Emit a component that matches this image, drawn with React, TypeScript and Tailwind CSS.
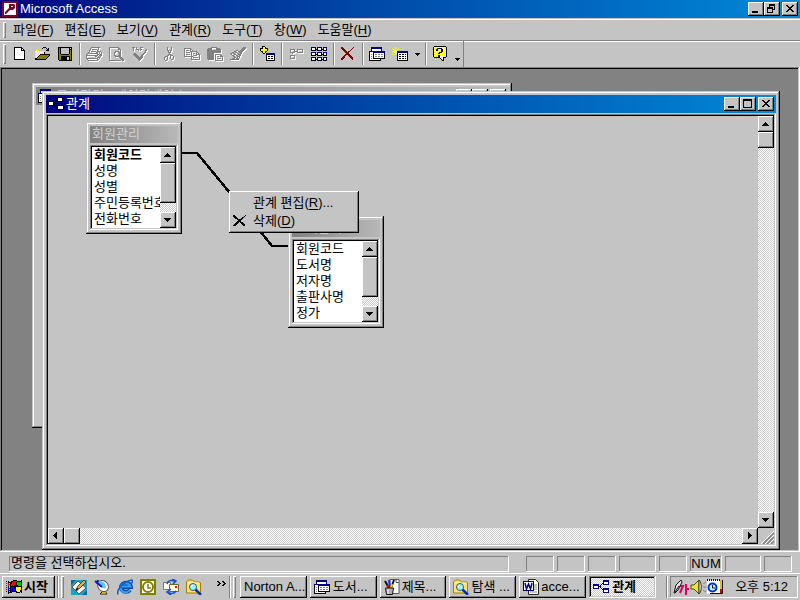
import type { ReactNode } from "react"

const FACE = "bg-[#c4c4c4]"
const WINDOW_EDGE =
  "shadow-[inset_-1px_-1px_#000,inset_1px_1px_#c4c4c4,inset_-2px_-2px_#808080,inset_2px_2px_#fff]"
const BUTTON_EDGE = "shadow-[inset_-1px_-1px_#000,inset_1px_1px_#fff,inset_-2px_-2px_#808080]"
const SUNKEN_EDGE =
  "shadow-[inset_-1px_-1px_#fff,inset_1px_1px_#808080,inset_-2px_-2px_#c4c4c4,inset_2px_2px_#000]"
const THIN_SUNKEN = "shadow-[inset_-1px_-1px_#fff,inset_1px_1px_#808080]"
const CHECKER = "bg-[repeating-conic-gradient(#fff_0_25%,#cacaca_0_50%)] bg-[length:2px_2px]"

const palette: Record<string, string> = {
  k: "#000000",
  w: "#ffffff",
  n: "#000080",
  g: "#808080",
  l: "#c0c0c0",
  y: "#ffff00",
  o: "#808000",
  m: "#800000",
  r: "#ff0000",
  b: "#0000ff",
  e: "#00c000"
}

const sprites: Record<string, string[]> = {
  relation: [
    "..........kkkkk.",
    ".........kwwwwk.",
    ".........kwwwwk.",
    "........kkwwwwk.",
    "kkkkkkkk.kkkkk..",
    "kwwwwkk.........",
    "kwwwwkkk.k......",
    "kwwwwkk.........",
    "kkkkkkkk.kkkkkk.",
    "........kkwwwwwk",
    ".........kwwwwwk",
    ".........kwwwwwk",
    "..........kkkkkk"
  ],
  relationBlue: [
    "..........nnnnnn",
    "..........nnnnnn",
    "..........nwwwwn",
    ".........knwwwwn",
    "nnnnnn..k.nnnnnn",
    "nnnnnn.k........",
    "nwwwwnkk........",
    "nwwwwn.k........",
    "nnnnnn..k.nnnnnn",
    ".........knnnnnn",
    "..........nwwwwn",
    "..........nwwwwn",
    "..........nnnnnn"
  ],
  blank: [
    "kkkkkkkk...",
    "kwwwwwwkk..",
    "kwwwwwwkwk.",
    "kwwwwwwkkkk",
    "kwwwwwwwwwk",
    "kwwwwwwwwwk",
    "kwwwwwwwwwk",
    "kwwwwwwwwwk",
    "kwwwwwwwwwk",
    "kwwwwwwwwwk",
    "kwwwwwwwwwk",
    "kwwwwwwwwwk",
    "kkkkkkkkkkk"
  ],
  open: [
    ".........kkk....",
    "........k...k.k.",
    ".............kk.",
    "..yyy.......kkk.",
    ".ywywyyyyyy.....",
    ".ywywywywyk.....",
    ".yywywywywk.....",
    ".ywywykkkkkkkkkk",
    ".yywykoooooooook",
    ".ywykoooooooook.",
    ".yykoooooooook..",
    ".kkoooooooook...",
    ".kkkkkkkkkkk...."
  ],
  save: [
    "kkkkkkkkkkkkkk",
    "kokllllllllklk",
    "kokllllllllkkk",
    "kokllllllllkok",
    "kokllllllllkok",
    "kokllllllllkok",
    "kokllllllllkok",
    "kookkkkkkkkook",
    "kooooooooooook",
    "kookkkkkkkkkok",
    "kookkkkkkllkok",
    "kookkkkkkllkok",
    "kookkkkkkllkok",
    ".kkkkkkkkkkkkk"
  ],
  print: [
    ".....ggggggggg..",
    "....g.......g...",
    "....g.ggggg.g...",
    "...g.......g....",
    "...g.ggggg.gggg.",
    "..g.......gg.g.g",
    ".ggggggggggg.g.g",
    "g..........gg.gg",
    "gggggggggggg.ggg",
    "g........gg.g.g.",
    "g..........ggg..",
    "gggggggggggg.g..",
    ".g.........gg...",
    "..gggggggggg...."
  ],
  preview: [
    "gggggggggg......",
    "g........gg.....",
    "g........ggg....",
    "g..........g....",
    "g.....gggg.g....",
    "g....gg..ggg....",
    "g....g....gg....",
    "g....g....gg....",
    "g....gg..ggg....",
    "g.....gggggg....",
    "g.........ggg...",
    "g..........ggg..",
    "g...........ggg.",
    "gggggggggggg.gg."
  ],
  spell: [
    "ggg.g...ggg.....",
    ".g..g...g.......",
    ".g..ggg.gg....g.",
    ".g....g.g....gg.",
    ".............g..",
    "............gg..",
    "..gg.......gg...",
    ".gggg.....gg....",
    "..gggg...gg.....",
    "...gggg.ggg.....",
    "....ggggggg.....",
    ".....ggggg......",
    "......ggg.......",
    ".......g........"
  ],
  cut: [
    "...g...g...",
    "...g...g...",
    "...g...g...",
    "...gg.gg...",
    "....g.g....",
    "....ggg....",
    ".....g.....",
    "....ggg....",
    "...gg.ggg..",
    ".ggg..g..g.",
    "g..g..g..g.",
    "g..g..g..g.",
    "g..g...gg..",
    ".gg........"
  ],
  copy: [
    "ggggggg.........",
    "g.....gg........",
    "g.ggg.g.g.......",
    "g.....ggggggg...",
    "g.gggg.g....gg..",
    "g......g.gg.g.g.",
    "g.gggg.g....gggg",
    "g......g.gggg..g",
    "ggggggggg......g",
    ".......g.ggggg.g",
    ".......g.......g",
    ".......ggggggggg"
  ],
  paste: [
    "....gggggg......",
    ".gggg....gggg...",
    "ggggg....ggggg..",
    "gggggggggggggg..",
    "gggggggggggggg..",
    "gggggggggggggg..",
    "ggggggg.........",
    "ggggggg.gggggg..",
    "ggggggg.g....gg.",
    "ggggggg.g.gg.ggg",
    "ggggggg.g......g",
    "ggggggg.g.gggg.g",
    ".gggggg.g......g",
    "........gggggggg"
  ],
  brush: [
    ".............ggg",
    "............gggg",
    "...........gggg.",
    "......gg..gggg..",
    "....gg..ggggg...",
    "..gg.gg..ggg....",
    "gg.gg..gg.gg....",
    ".g..gg..ggg.....",
    "..gg..gg.gg.....",
    "...gg..ggg......",
    "....gg.g.g......",
    "..ggg.ggg.......",
    "ggggggggg......."
  ],
  addTable: [
    "...kkk..........",
    "...kyyk.........",
    ".kkkyykkk.......",
    ".kyyyyyyk.......",
    ".kyyyyyyk.......",
    "..kkyykk........",
    "...kyyk.........",
    "....kk.nnnnnnnnn",
    ".......nnnnnnnnn",
    ".......kwwwwwwwk",
    ".......kwkkwkkwk",
    ".......kwwwwwwwk",
    ".......kwkkwkkwk",
    ".......kwwwwwwwk",
    ".......kkkkkkkkk"
  ],
  direct: [
    "ggggg..gggggg",
    "g...g..g....g",
    "g...gggg....g",
    "ggggg..gggggg",
    "..g..........",
    ".............",
    "ggggg........",
    "g...g........",
    "g...g........",
    "ggggg........"
  ],
  showAll: [
    "nnnnn.nnnnn.nnnn",
    "nwwwn.nwwwn.nwwn",
    "kwwwkkkwwwkkkwwk",
    "kkkkk.kkkkk.kkkk",
    "................",
    "nnnnn.nnnnn.nnnn",
    "nwwwn.nwwwn.nwwn",
    "kwwwkkkwwwkkkwwk",
    "kkkkk.kkkkk.kkkk",
    "................",
    "nnnnn.nnnnn.nnnn",
    "nwwwn.nwwwn.nwwn",
    "kwwwkkkwwwkkkwwk",
    "kkkkk.kkkkk.kkkk"
  ],
  cross: [
    "mm..........m.",
    "mmm........m..",
    ".mmm......m...",
    "..mmm....m....",
    "...mmm.mm.....",
    "....mmmm......",
    ".....mmm......",
    "....mmmmm.....",
    "...mm..mmm....",
    "..mm....mmm...",
    ".mmm.....mmm..",
    "mmm.......mm..",
    "mm.........m.."
  ],
  database: [
    "..nnnnnnnnnnn...",
    "..nnnnnnnnnnn...",
    "..nwwwwwwwwwn...",
    "..nwwwwwwwwwn...",
    "nnnnnnnnnnnnnnnn",
    "nwwwnnnnnnnnnnnn",
    "nwwwkwwwwwwwwwwk",
    "kwgwkwggwggwggwk",
    "kwwwkwwwwwwwwwwk",
    "kwgwkwggwggwggwk",
    "kwwwkwwwwwwwwwwk",
    "kwgwkkkkkkkkkkkk",
    "kwwwwwwwwwwk....",
    "kkkkkkkkkkkk...."
  ],
  newObject: [
    "...y............",
    "y..y..y.........",
    ".y.y.y..........",
    "..ywy...........",
    "yyywwnnnnnnnnnnn",
    "..yywnnnnnnnnnnn",
    ".y.y.kwwwwwwwwwk",
    "y..y.kwkkwkkwkwk",
    ".....kwwwwwwwwwk",
    ".....kwkkwkkwkwk",
    ".....kwwwwwwwwwk",
    ".....kwkkwkkwkwk",
    ".....kwwwwwwwwwk",
    ".....kkkkkkkkkkk"
  ],
  help: [
    ".kkkkkkkkkkkk..",
    "kwywywywywywyk.",
    "kywynnnnnwwyyk.",
    "kwynnwywnnywyk.",
    "kywnnywynnwywk.",
    "kwywywywnnywyk.",
    "kywywynnnywywk.",
    "kwywynnywywyyk.",
    "kywywywywywywk.",
    "kwywynnywywyyk.",
    "kywywnnwywywyk.",
    ".kkkkkkwywkkk..",
    ".......kywk....",
    "........kyk....",
    ".........kk...."
  ],
  erase: [
    "kk..........k",
    "kkk........k.",
    ".kkk.....kk..",
    "..kkk...kk...",
    "....kkkkk....",
    ".....kkk.....",
    "....kkkk.....",
    "...kkk.kkk...",
    "..kkk...kkk..",
    ".kkk.....kkk.",
    "kkk.......kk."
  ],
  flag: [
    ".......kkkk....k",
    "k.k..kkrrrrkkkkk",
    "..kkkkrrrrkeeeek",
    "r.r.kkrrrrkeeeek",
    "..rrkrrrrrkeeeek",
    "r.r.krrrkkkkeeek",
    "..k.kkkkkkkkkkkk",
    "b.b.kbbbkkyyyyyk",
    "..bbkbbbbkyyyyyk",
    "b.b.kbbbbkyyyyyk",
    "..bbkbbbbkyyyykk",
    "k.k.kbkkkkkyyykk",
    "..kkkk....kkkk.k",
    "..k............."
  ]
}

interface SpriteProps {
  name: string
  disabled?: boolean
}

function Sprite({ name, disabled }: SpriteProps) {
  const rows = sprites[name]
  const width = rows[0].length + 1
  const height = rows.length + 1

  const draw = (offset: number, color?: string) =>
    rows.flatMap((row, y) =>
      [...row].map((key, x) =>
        key === "." ? null : (
          <rect
            key={`${offset}-${x}-${y}`}
            x={x + offset}
            y={y + offset}
            width={1}
            height={1}
            fill={color ?? palette[key]}
          />
        )
      )
    )

  return (
    <svg
      width={width}
      height={height}
      viewBox={`0 0 ${width} ${height}`}
      shapeRendering="crispEdges"
      className="shrink-0"
      aria-hidden="true"
    >
      {disabled && draw(1, "#ffffff")}
      {draw(0)}
    </svg>
  )
}

function Drawing({ children }: { children: ReactNode }) {
  return (
    <svg width="16" height="16" viewBox="0 0 16 16" className="shrink-0" aria-hidden="true">
      {children}
    </svg>
  )
}

function AccessLogo() {
  return (
    <Drawing>
      <rect width="16" height="16" fill="#800028" />
      <rect x="2" y="2" width="12" height="12" fill="#fff" />
      <path d="M7 3h5l1 1v3l-2 2H8l-4 4H3v-2l4-4z" fill="#800028" />
      <path d="M9 5h2v1H9z" fill="#fff" />
    </Drawing>
  )
}

function DesktopIcon() {
  return (
    <Drawing>
      <path d="M0 1h16v15H0z" fill="#1c9fd0" />
      <path d="M0 1h5L0 6zM16 16h-5l5-5z" fill="#0868a0" />
      <path d="M1 8 7 2l8 7-7 6z" fill="#fff" stroke="#555" />
      <path d="M5 11 7 7l6-6 2 2-6 6z" fill="#f0b040" stroke="#703000" />
      <path d="m5 11 2-1" stroke="#111" strokeWidth="2" />
    </Drawing>
  )
}

function DishIcon() {
  return (
    <Drawing>
      <path d="M6 15h7l-2-3H9z" fill="#eee" stroke="#222" />
      <ellipse cx="9" cy="7" rx="5" ry="6" transform="rotate(-40 9 7)" fill="#fff" stroke="#555" />
      <path d="M4 3c4-2 8 1 8 6-4 1-7-2-8-6z" fill="#64c8f0" />
      <path d="m1 2 7 6M4 1 3 5" stroke="#0020c0" strokeWidth="2" />
      <path d="M8 14h4" stroke="#d0a000" strokeWidth="1.5" />
    </Drawing>
  )
}

function ExplorerIcon() {
  return (
    <Drawing>
      <path d="M13 11a5 4.5 0 1 1 1-3H5" fill="none" stroke="#0848b0" strokeWidth="4" />
      <path d="M13 11a5 4.5 0 1 1 .5-3.5H5" fill="none" stroke="#38a0f4" strokeWidth="2" />
      <path d="M1 15.500C-1 11 7 2 15 1c1 1 0 3-1 4" fill="none" stroke="#0860c8" strokeWidth="1.5" />
    </Drawing>
  )
}

function OutlookIcon() {
  return (
    <Drawing>
      <rect width="16" height="16" fill="#808000" />
      <rect x="2" y="2" width="12" height="12" fill="#fff" />
      <circle cx="8" cy="8" r="5" fill="#fff" stroke="#808000" strokeWidth="2" />
      <path d="M8 5v4h3" fill="none" stroke="#808000" strokeWidth="1.5" />
    </Drawing>
  )
}

function MailIcon() {
  return (
    <Drawing>
      <path d="M.5 3.500h7v7h-7z" fill="#fff" stroke="#777" />
      <path d="M6.500 5.500h9v7h-9z" fill="#fff8d0" stroke="#806020" />
      <path d="M12 7h2v2h-2z" fill="#e02000" />
      <path d="M4 5c1-4 4-4 8-3M9 0l4 2-3 3" fill="none" stroke="#1050d0" strokeWidth="1.5" />
      <path d="M13 12c-2 3-5 3-8 1M8 10l-4 3 4 3" fill="none" stroke="#1050d0" strokeWidth="1.5" />
    </Drawing>
  )
}

function SearchFolderIcon() {
  return (
    <Drawing>
      <path d="M.5 14V3l2-2h4l2 2h5l1 1v10z" fill="#ffe070" stroke="#a08000" />
      <path d="M2 4h11" stroke="#fff8c0" />
      <path d="m9 10 6 6" stroke="#0030b0" strokeWidth="2.5" />
      <circle cx="7" cy="8" r="3.5" fill="#a0f4ff" stroke="#305878" />
      <path d="m5 8 2-2" stroke="#fff" />
    </Drawing>
  )
}

function CupIcon() {
  return (
    <Drawing>
      <path d="M6 .5h9v14H6z" fill="#fff" stroke="#555" />
      <path d="M12 .5v3h3" fill="none" stroke="#555" />
      <path d="m1 2 4 7M10 1 7 9" stroke="#111" strokeWidth="2" />
      <path d="m5 1 1 7" stroke="#1030ff" strokeWidth="2" />
      <path d="m3 6 2 3" stroke="#e00000" strokeWidth="2" />
      <path d="m8 5-1 4" stroke="#e8d000" strokeWidth="2" />
      <path d="M1.5 9h8l-1 6.5h-6z" fill="#b0b0b0" stroke="#111" />
      <path d="M4 10v5" stroke="#fff" />
    </Drawing>
  )
}

function WordIcon() {
  return (
    <Drawing>
      <path d="M5.5.5h7l3 3v12h-10z" fill="#fff" stroke="#222" />
      <path d="M11 6h3M11 8h3M11 10h3M7 13h7" stroke="#888" />
      <rect x=".5" y="2.5" width="10" height="9" fill="#fff" stroke="#000080" />
      <path d="m2 4 1.5 6 2-5 2 5L9 4" fill="none" stroke="#000080" strokeWidth="1.5" />
    </Drawing>
  )
}

function ImeIcon() {
  return (
    <Drawing>
      <path d="M6 7h4l-3 7M13 5v11M13 10h3" fill="none" stroke="#e00060" strokeWidth="2" />
      <path d="m1 14 2-8 5-5 1 2-4 8-3 3z" fill="#e8e8e8" stroke="#111" />
      <path d="m2 13 4-6" stroke="#111" />
    </Drawing>
  )
}

function SpeakerIcon() {
  return (
    <Drawing>
      <path d="M1 6h3l5-5v14l-5-5H1z" fill="#f0e040" stroke="#555500" />
      <path d="M9 1c3 3 3 11 0 14z" fill="#fff" stroke="#333" />
      <path d="m13 5 3-2M13 8h3M13 11l3 2" stroke="#808080" />
    </Drawing>
  )
}

function SchedulerIcon() {
  return (
    <Drawing>
      <path d="M0 1h13v14H0z" fill="#fff" />
      <path d="M0 1h13" stroke="#111" strokeDasharray="1 1" strokeWidth="2" />
      <path d="M3 14.5h12.500V1" fill="none" stroke="#111" />
      <path d="M14 1v9" stroke="#e8c000" strokeWidth="2" />
      <path d="M14 10v4" stroke="#d00000" strokeWidth="2" />
      <circle cx="5.5" cy="8.5" r="4" fill="#c0f8ff" stroke="#0030c0" strokeWidth="2" />
      <path d="M5.5 6v3H8" fill="none" stroke="#111" />
    </Drawing>
  )
}

type Glyph = "minimize" | "restore" | "maximize" | "close"

function CaptionButton({ glyph, label }: { glyph: Glyph; label: string }) {
  return (
    <button
      type="button"
      aria-label={label}
      className={`grid h-[14px] w-4 place-items-center ${FACE} ${BUTTON_EDGE}`}
    >
      <svg width="16" height="14" viewBox="0 0 16 14" fill="#000" shapeRendering="crispEdges">
        {glyph === "minimize" && <path d="M4 9h6v2H4z" />}
        {glyph === "maximize" && <path fillRule="evenodd" d="M3 2h9v9H3zM4 4v6h7V4z" />}
        {glyph === "restore" && (
          <path
            fillRule="evenodd"
            d="M5 2h6v6H9v3H3V5h2zM6 4v1h3v2h1V4zM4 7v3h4V7z"
          />
        )}
        {glyph === "close" && (
          <path d="M4 3h2v1h1v1h2V4h1V3h2v1h-1v1h-1v1H9v1h1v1h1v1h1v1h-2V9H9V8H7v1H6v1H4V9h1V8h1V7h1V6H6V5H5V4H4z" />
        )}
      </svg>
    </button>
  )
}

function CaptionButtons({ maximized }: { maximized?: boolean }) {
  return (
    <div className="ml-auto flex pr-[2px]">
      <CaptionButton glyph="minimize" label="최소화" />
      <CaptionButton
        glyph={maximized ? "restore" : "maximize"}
        label={maximized ? "이전 크기로" : "최대화"}
      />
      <div className="w-[2px]" />
      <CaptionButton glyph="close" label="닫기" />
    </div>
  )
}

const arrows = {
  up: "M7 6h1v1h1v1h1v1h1v1H4V9h1V8h1V7h1z",
  down: "M4 6h7v1h-1v1H9v1H8v1H7V9H6V8H5V7H4z",
  left: "M8 4h1v7H8v-1H7V9H6V8H5V7h1V6h1V5h1z",
  right: "M6 4h1v1h1v1h1v1h1v1H9v1H8v1H7v1H6z"
}

function ScrollButton({ direction }: { direction: keyof typeof arrows }) {
  return (
    <button
      type="button"
      aria-label={direction}
      className={`size-4 shrink-0 ${FACE} ${BUTTON_EDGE}`}
    >
      <svg width="16" height="16" viewBox="0 0 16 16" shapeRendering="crispEdges">
        <path d={arrows[direction]} />
      </svg>
    </button>
  )
}

function TableBox({ title, fields, boldFirst }: { title: string; fields: string[]; boldFirst?: boolean }) {
  return (
    <section className={`w-24 p-1 ${FACE} ${WINDOW_EDGE}`}>
      <h2 className="h-[17px] bg-linear-to-r from-[#828282] to-[#b8b8b8] pl-[2px] leading-4 text-[#d0d0d0]">
        {title}
      </h2>
      <div className={`mt-[2px] flex bg-white p-[2px] ${SUNKEN_EDGE}`}>
        <ul className="min-w-0 flex-1 overflow-hidden pb-px pl-[2px] leading-4 whitespace-nowrap">
          {fields.map((field, index) => (
            <li key={field} className={boldFirst && index === 0 ? "font-bold" : ""}>
              {field}
            </li>
          ))}
        </ul>
        <div className={`flex w-4 flex-col ${CHECKER}`}>
          <ScrollButton direction="up" />
          <div className={`h-10 ${FACE} ${BUTTON_EDGE}`} />
          <div className="flex-1" />
          <ScrollButton direction="down" />
        </div>
      </div>
    </section>
  )
}

function Shortcut({ text, letter }: { text: string; letter: string }) {
  return (
    <>
      {text}(<span className="underline underline-offset-2">{letter}</span>)
    </>
  )
}

function Handle() {
  return (
    <div className={`w-[3px] shrink-0 self-stretch ${FACE} shadow-[inset_1px_1px_#fff,inset_-1px_-1px_#808080]`} />
  )
}

function Separator() {
  return <div className="mx-[2px] h-[22px] w-[2px] shrink-0 border-l border-l-[#808080] bg-white" />
}

function ToolButton({ name, disabled, label }: { name: string; disabled?: boolean; label: string }) {
  return (
    <button
      type="button"
      aria-label={label}
      disabled={disabled}
      className="grid h-[22px] w-[23px] shrink-0 place-items-center"
    >
      <Sprite name={name} disabled={disabled} />
    </button>
  )
}

function DropArrow({ label }: { label: string }) {
  return (
    <button type="button" aria-label={label} className="grid h-[22px] w-[11px] shrink-0 place-items-center">
      <svg width="5" height="3" viewBox="0 0 5 3" shapeRendering="crispEdges">
        <path d="M0 0h5v1H4v1H3v1H2V2H1V1H0z" />
      </svg>
    </button>
  )
}

const menus = [
  ["파일", "F"],
  ["편집", "E"],
  ["보기", "V"],
  ["관계", "R"],
  ["도구", "T"],
  ["창", "W"],
  ["도움말", "H"]
]

function MenuBar() {
  return (
    <nav className="flex h-[23px] items-center border-t border-[#c4c4c4] py-[3px] pl-[3px] shadow-[inset_0_1px_#fff,inset_0_-1px_#808080]">
      <Handle />
      <div className="flex gap-[11px] pl-[7px]">
        {menus.map(([text, letter]) => (
          <button key={letter} type="button" className="whitespace-nowrap">
            <Shortcut text={text} letter={letter} />
          </button>
        ))}
      </div>
    </nav>
  )
}

function ToolBar() {
  return (
    <div className="flex h-[26px] items-center shadow-[inset_0_1px_#fff]">
      <div className="flex h-full items-center border-r border-[#808080] py-[3px] pl-[3px]">
        <Handle />
        <div className="flex pl-[2px]">
          <ToolButton name="blank" label="새로 만들기" />
          <ToolButton name="open" label="열기" />
          <ToolButton name="save" label="저장" />
        </div>
        <Separator />
        <ToolButton name="print" label="인쇄" disabled />
        <ToolButton name="preview" label="미리 보기" disabled />
        <ToolButton name="spell" label="맞춤법 검사" disabled />
        <Separator />
        <ToolButton name="cut" label="잘라내기" disabled />
        <ToolButton name="copy" label="복사" disabled />
        <ToolButton name="paste" label="붙여넣기" disabled />
        <ToolButton name="brush" label="서식 복사" disabled />
        <Separator />
        <ToolButton name="addTable" label="테이블 표시" />
        <Separator />
        <ToolButton name="direct" label="직접 관계 표시" disabled />
        <ToolButton name="showAll" label="모든 관계 표시" />
        <Separator />
        <ToolButton name="cross" label="삭제" />
        <Separator />
        <ToolButton name="database" label="데이터베이스 창" />
        <ToolButton name="newObject" label="새 개체" />
        <DropArrow label="새 개체 목록" />
        <Separator />
        <ToolButton name="help" label="도움말" />
        <div className="h-4 self-end overflow-hidden">
          <DropArrow label="단추 추가" />
        </div>
      </div>
    </div>
  )
}

function ContextMenu() {
  return (
    <div
      role="menu"
      className={`w-[130px] p-[3px] ${FACE} shadow-[inset_-1px_-1px_#000,inset_1px_1px_#fff,inset_-2px_-2px_#808080]`}
    >
      <button type="button" role="menuitem" className="flex h-[18px] w-full items-center pl-[21px] whitespace-nowrap">
        <Shortcut text="관계 편집" letter="R" />
        ...
      </button>
      <button type="button" role="menuitem" className="flex h-[18px] w-full items-center whitespace-nowrap">
        <span className="w-[21px] pl-px">
          <Sprite name="erase" />
        </span>
        <Shortcut text="삭제" letter="D" />
      </button>
    </div>
  )
}

function RelationWindow() {
  return (
    <section
      className={`absolute top-[22px] right-[18px] bottom-0 left-[40px] flex flex-col p-1 ${FACE} ${WINDOW_EDGE}`}
    >
      <header className="mb-px flex h-[18px] shrink-0 items-center bg-linear-to-r from-[#000080] to-[#0c88d8] pl-[2px] text-white">
        <Sprite name="relation" />
        <h1 className="pl-px">관계</h1>
        <CaptionButtons />
      </header>

      <div className={`flex min-h-0 flex-1 flex-col p-[2px] ${SUNKEN_EDGE}`}>
        <div className="flex min-h-0 flex-1">
          <div className="relative min-w-0 flex-1 overflow-hidden">
            <svg width="300" height="200" viewBox="0 0 300 200" className="absolute top-0 left-0" aria-hidden="true">
              <path
                d="M133 37h16l33 40L224 130h17"
                fill="none"
                stroke="#000"
                strokeWidth="2.5"
                shapeRendering="crispEdges"
              />
            </svg>
            <div className="absolute top-[6px] left-[38px]">
              <TableBox
                title="회원관리"
                fields={["회원코드", "성명", "성별", "주민등록번호", "전화번호"]}
                boldFirst
              />
            </div>
            <div className="absolute top-[100px] left-[240px]">
              <TableBox title="도서관리" fields={["회원코드", "도서명", "저자명", "출판사명", "정가"]} />
            </div>
            <div className="absolute top-[75px] left-[181px]">
              <ContextMenu />
            </div>
          </div>
          <div className={`flex w-4 flex-col ${CHECKER}`}>
            <ScrollButton direction="up" />
            <div className={`h-4 ${FACE} ${BUTTON_EDGE}`} />
            <div className="flex-1" />
            <ScrollButton direction="down" />
          </div>
        </div>
        <div className="flex h-4 shrink-0">
          <div className={`flex flex-1 ${CHECKER}`}>
            <ScrollButton direction="left" />
            <div className={`w-4 ${FACE} ${BUTTON_EDGE}`} />
            <div className="flex-1" />
            <ScrollButton direction="right" />
          </div>
          <svg width="16" height="16" viewBox="0 0 16 16" aria-hidden="true">
            <path d="M3 16 16 3M7 16l9-9M11 16l5-5" stroke="#fff" />
            <path d="M5 16 16 5M9 16l7-7M13 16l3-3" stroke="#808080" strokeWidth="1.5" />
          </svg>
        </div>
      </div>
    </section>
  )
}

function DatabaseWindow() {
  return (
    <section className={`absolute top-[14px] left-[30px] h-[345px] w-[480px] p-1 ${FACE} ${WINDOW_EDGE}`}>
      <header className="flex h-[18px] items-center bg-linear-to-r from-[#828282] to-[#b8b8b8] pl-[2px] text-[#d0d0d0]">
        <Sprite name="database" />
        <h2 className="pl-px">도서관리 : 데이터베이스</h2>
        <CaptionButtons />
      </header>
    </section>
  )
}

function StatusPane({ width, children }: { width: string; children?: ReactNode }) {
  return <div className={`h-4 shrink-0 text-center leading-4 ${width} ${THIN_SUNKEN}`}>{children}</div>
}

function StatusBar() {
  return (
    <footer className="flex h-5 gap-[3px] pt-1 pr-2 pl-[9px]">
      <div className={`mr-[14px] h-4 min-w-0 flex-1 pl-[2px] leading-[14px] ${THIN_SUNKEN}`}>
        명령을 선택하십시오.
      </div>
      <StatusPane width="w-7" />
      <StatusPane width="w-7" />
      <StatusPane width="w-7" />
      <StatusPane width="w-[37px]" />
      <StatusPane width="w-7" />
      <StatusPane width="w-8">NUM</StatusPane>
      <StatusPane width="w-9" />
      <StatusPane width="w-7" />
    </footer>
  )
}

const quickLaunch = [
  { label: "바탕 화면 보기", icon: <DesktopIcon /> },
  { label: "채널 보기", icon: <DishIcon /> },
  { label: "Internet Explorer", icon: <ExplorerIcon /> },
  { label: "Outlook", icon: <OutlookIcon /> },
  { label: "Outlook Express", icon: <MailIcon /> },
  { label: "탐색기", icon: <SearchFolderIcon /> }
]

const tasks = [
  { label: "Norton A...", icon: null },
  { label: "도서...", icon: <Sprite name="database" /> },
  { label: "제목...", icon: <CupIcon /> },
  { label: "탐색 ...", icon: <SearchFolderIcon /> },
  { label: "acce...", icon: <WordIcon /> }
]

function TaskBar() {
  return (
    <footer className="flex h-7 items-center pt-[4px] pr-[2px] pb-[2px] pl-[2px] shadow-[inset_0_1px_#c4c4c4,inset_0_2px_#fff]">
      <button
        type="button"
        className={`flex h-[22px] w-[53px] shrink-0 items-center gap-px pl-1 font-bold whitespace-nowrap ${FACE} ${BUTTON_EDGE}`}
      >
        <Sprite name="flag" />
        시작
      </button>
      <Separator />
      <Handle />
      <div className="flex items-center gap-[7px] pl-[7px]">
        {quickLaunch.map((item) => (
          <button key={item.label} type="button" aria-label={item.label}>
            {item.icon}
          </button>
        ))}
      </div>
      <button type="button" aria-label="더 보기" className="mr-px mb-2 ml-[15px]">
        <svg width="9" height="5" viewBox="0 0 9 5" shapeRendering="crispEdges">
          <path d="M0 0h2v1h1v1h1v1H3v1H2v1H0V4h1V3h1V2H1V1H0zM5 0h2v1h1v1h1v1H8v1H7v1H5V4h1V3h1V2H6V1H5z" />
        </svg>
      </button>
      <Separator />
      <Handle />
      <div className="flex min-w-0 flex-1 gap-[3px] pr-[8px] pl-[4px]">
        {tasks.map((task) => (
          <button
            key={task.label}
            type="button"
            className={`flex h-[22px] max-w-[67px] min-w-0 flex-1 items-center gap-[2px] overflow-hidden pl-1 whitespace-nowrap ${FACE} ${BUTTON_EDGE}`}
          >
            {task.icon}
            {task.label}
          </button>
        ))}
        <button
          type="button"
          className={`flex h-[22px] max-w-[67px] min-w-0 flex-1 items-center gap-[2px] overflow-hidden pl-1 font-bold whitespace-nowrap ${CHECKER} ${SUNKEN_EDGE}`}
        >
          <Sprite name="relationBlue" />
          관계
        </button>
      </div>
      <Separator />
      <div className={`flex h-[22px] w-32 shrink-0 items-center gap-px pl-[3px] whitespace-nowrap ${THIN_SUNKEN}`}>
        <ImeIcon />
        <SpeakerIcon />
        <SchedulerIcon />
        <span className="ml-auto pr-[10px]">오후 5:12</span>
      </div>
    </footer>
  )
}

export default function App() {
  return (
    <div
      className={`flex h-screen flex-col overflow-hidden font-['Liberation_Sans','Noto_Sans_CJK_KR',sans-serif] text-[13px] leading-4 text-black ${FACE}`}
    >
      <header className="flex h-[18px] shrink-0 items-center bg-linear-to-r from-[#000080] to-[#0c88d8] pl-[2px] text-white">
        <AccessLogo />
        <h1 className="pl-[2px]">Microsoft Access</h1>
        <CaptionButtons maximized />
      </header>
      <MenuBar />
      <ToolBar />
      <main className={`relative min-h-0 flex-1 bg-[#828282] p-[2px] ${SUNKEN_EDGE}`}>
        <div className="relative h-full overflow-hidden">
          <DatabaseWindow />
          <RelationWindow />
        </div>
      </main>
      <StatusBar />
      <TaskBar />
    </div>
  )
}
